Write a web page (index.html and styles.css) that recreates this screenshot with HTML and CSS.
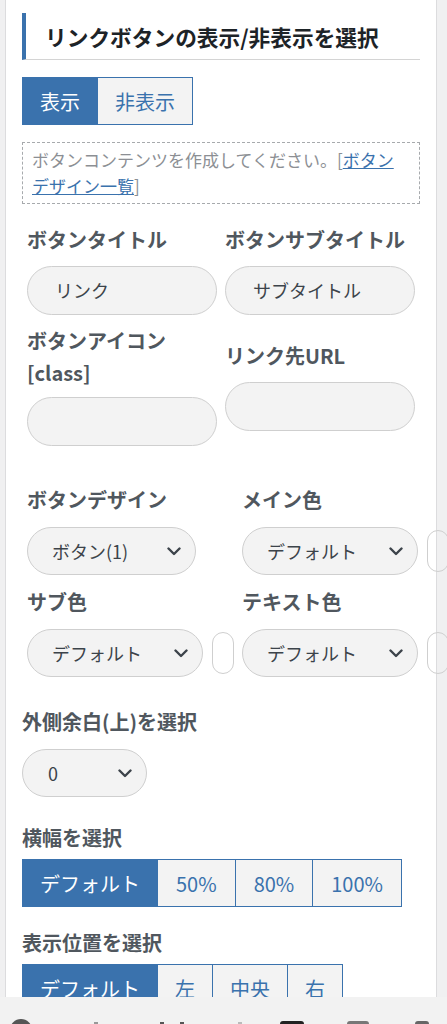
FILE: index.html
```html
<!DOCTYPE html>
<html lang="ja">
<head>
  <meta charset="UTF-8">
  <meta name="viewport" content="width=device-width, initial-scale=1.0">
  <title>リンクボタン設定</title>
  <link rel="stylesheet" href="styles.css">
</head>
<body>
  <div class="panel">
    <h2 class="panel-title">リンクボタンの表示/非表示を選択</h2>

    <div class="seg seg-first">
      <span class="seg-item active">表示</span>
      <span class="seg-item">非表示</span>
    </div>

    <div class="notice">
      ボタンコンテンツを作成してください。[<a href="#">ボタンデザイン一覧</a>]
    </div>

    <div class="fields">
      <div class="field">
        <label class="label">ボタンタイトル</label>
        <div class="input">リンク</div>
      </div>
      <div class="field">
        <label class="label">ボタンサブタイトル</label>
        <div class="input">サブタイトル</div>
      </div>
      <div class="field">
        <label class="label">ボタンアイコン<br>[class]</label>
        <div class="input"></div>
      </div>
      <div class="field">
        <label class="label">リンク先URL</label>
        <div class="input"></div>
      </div>
    </div>

    <div class="colors">
      <div class="field">
        <label class="label">ボタンデザイン</label>
        <div class="pick">
          <div class="select w169">ボタン(1)<svg class="chev" viewBox="0 0 14 9"><path d="M1.5 1.5 7 7l5.5-5.5"/></svg></div>
        </div>
      </div>
      <div class="field">
        <label class="label">メイン色</label>
        <div class="pick">
          <div class="select">デフォルト<svg class="chev" viewBox="0 0 14 9"><path d="M1.5 1.5 7 7l5.5-5.5"/></svg></div>
          <span class="swatch"></span>
        </div>
      </div>
      <div class="field">
        <label class="label">サブ色</label>
        <div class="pick">
          <div class="select">デフォルト<svg class="chev" viewBox="0 0 14 9"><path d="M1.5 1.5 7 7l5.5-5.5"/></svg></div>
          <span class="swatch"></span>
        </div>
      </div>
      <div class="field">
        <label class="label">テキスト色</label>
        <div class="pick">
          <div class="select">デフォルト<svg class="chev" viewBox="0 0 14 9"><path d="M1.5 1.5 7 7l5.5-5.5"/></svg></div>
          <span class="swatch"></span>
        </div>
      </div>
    </div>

    <div class="block margin-block">
      <label class="label">外側余白(上)を選択</label>
      <div class="select small">0<svg class="chev" viewBox="0 0 14 9"><path d="M1.5 1.5 7 7l5.5-5.5"/></svg></div>
    </div>

    <div class="block width-block">
      <label class="label">横幅を選択</label>
      <div class="seg">
        <span class="seg-item active wide">デフォルト</span>
        <span class="seg-item pct">50%</span>
        <span class="seg-item pct">80%</span>
        <span class="seg-item pct">100%</span>
      </div>
    </div>

    <div class="block pos-block">
      <label class="label">表示位置を選択</label>
      <div class="seg">
        <span class="seg-item active wide">デフォルト</span>
        <span class="seg-item">左</span>
        <span class="seg-item">中央</span>
        <span class="seg-item">右</span>
      </div>
    </div>
  </div>

  <div class="toolbar">
    <span class="tb-circle"></span>
    <span class="tb-dot d1"></span>
    <span class="tb-dot d2"></span>
    <span class="tb-dot d3"></span>
    <span class="tb-dot d4"></span>
    <span class="tb-sq dark"></span>
    <span class="tb-sq mid"></span>
    <span class="tb-sq end"></span>
  </div>
</body>
</html>
```

FILE: styles.css
```css
body {
  margin: 0;
  background-color: #f0f0f1;
  font-family: "Noto Sans CJK JP", "Noto Sans", sans-serif;
  color: #50575e;
  height: 1024px;
  overflow: hidden;
}
.panel {
  margin-left: 5px;
  width: 398px;
  min-height: 1100px;
  padding: 13px 16px 0;
  background-color: #fff;
  border-left: 1px solid #dcdcde;
  border-right: 1px solid #dcdcde;
}
.panel-title {
  margin: 0;
  height: 46px;
  padding-left: 19px;
  border-left: 4px solid #3a72ad;
  border-bottom: 1px solid #d4d4d4;
  font-size: 21.7px;
  font-weight: bold;
  line-height: 47px;
  color: #1d2327;
  white-space: nowrap;
}
.seg {
  display: flex;
  height: 48px;
}
.seg-first {
  margin-top: 17px;
}
.seg-item {
  display: flex;
  align-items: center;
  justify-content: center;
  padding: 0 17px;
  background-color: #f3f3f3;
  border: 1px solid #3a72ad;
  border-left: none;
  color: #3a72ad;
  font-size: 20px;
}
.seg-item.active {
  background-color: #3a72ad;
  color: #fff;
  border-left: 1px solid #3a72ad;
}
.seg-item.wide {
  box-sizing: border-box;
  width: 136px;
  padding: 0;
}
.seg-item.pct {
  padding: 0 18px;
}
.notice {
  margin-top: 17px;
  padding: 4px 9px;
  border: 1px dashed #a7aaad;
  font-size: 17px;
  line-height: 26px;
  color: #8c8f94;
}
.notice a {
  color: #3a72ad;
}
.fields {
  display: grid;
  grid-template-columns: 190px 190px;
  column-gap: 8px;
  row-gap: 10px;
  align-items: center;
  margin: 20px 0 0 5px;
}
.label {
  display: block;
  font-size: 20px;
  font-weight: bold;
  line-height: 32px;
  color: #50575e;
  margin-bottom: 10px;
  white-space: nowrap;
}
.fields .field:nth-child(3) .label {
  margin-bottom: 8px;
}
.input {
  box-sizing: border-box;
  height: 49px;
  padding: 0 27px;
  border: 1px solid #cfcfcf;
  border-radius: 25px;
  background-color: #f3f3f3;
  font-size: 18px;
  line-height: 47px;
  color: #3c434a;
}
.colors {
  display: grid;
  grid-template-columns: 207px 207px;
  column-gap: 8px;
  row-gap: 11px;
  margin: 38px 0 0 5px;
}
.colors .label {
  margin-bottom: 11px;
}
.pick {
  display: flex;
  align-items: center;
  gap: 9px;
}
.select {
  box-sizing: border-box;
  display: flex;
  align-items: center;
  justify-content: space-between;
  width: 176px;
  height: 48px;
  padding: 0 14px 0 24px;
  border: 1px solid #cfcfcf;
  border-radius: 24px;
  background-color: #f3f3f3;
  font-size: 18px;
  color: #3c434a;
}
.select.w169 { width: 169px; }
.chev {
  width: 14px;
  height: 9px;
  fill: none;
  stroke: #3c434a;
  stroke-width: 2.4;
  stroke-linecap: round;
  stroke-linejoin: round;
}
.swatch {
  box-sizing: border-box;
  width: 22px;
  height: 42px;
  border: 1px solid #cfcfcf;
  border-radius: 11px;
}
.block .label {
  margin-bottom: 11px;
}
.margin-block {
  margin-top: 29px;
}
.select.small {
  width: 125px;
  padding-left: 25px;
}
.width-block {
  margin-top: 25px;
}
.width-block .label,
.pos-block .label {
  margin-bottom: 5px;
}
.pos-block {
  margin-top: 20px;
}
.toolbar {
  position: fixed;
  left: 0;
  right: 0;
  bottom: 0;
  height: 27px;
  background-color: #f2f2f2;
  overflow: hidden;
}
.tb-circle,
.tb-dot,
.tb-sq {
  position: absolute;
  background-color: #555;
}
.tb-circle {
  left: 10px;
  top: 22px;
  width: 22px;
  height: 22px;
  border-radius: 50%;
}
.tb-dot { top: 25px; width: 4px; height: 4px; }
.d1 { left: 94px; background-color: #999; }
.d2 { left: 160px; }
.d3 { left: 180px; }
.d4 { left: 238px; background-color: #bbb; }
.tb-sq { top: 24px; width: 24px; height: 10px; border-radius: 3px; }
.tb-sq.dark { left: 280px; background-color: #222; }
.tb-sq.mid { left: 347px; width: 22px; background-color: #777; }
.tb-sq.end { left: 415px; width: 14px; background-color: #666; }
```
